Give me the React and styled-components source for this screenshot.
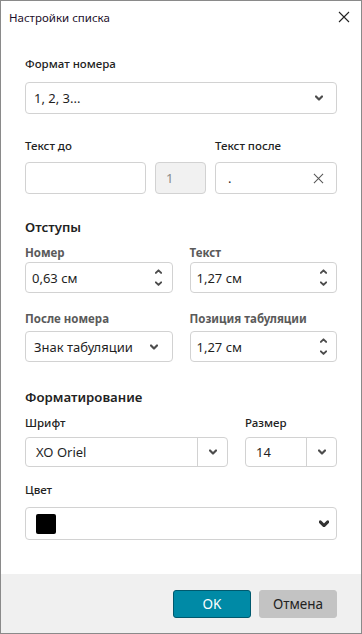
import React from 'react';
import styled, {createGlobalStyle} from 'styled-components';

const Global = createGlobalStyle`
  body {
    margin: 0;
    font-family: "Noto Sans", "Open Sans", sans-serif;
    color: #1f1f1f;
    background: #fff;
  }
`;

const Window = styled.div`
  width: 362px;
  height: 634px;
  box-sizing: border-box;
  border: 1px solid #8a8a8a;
  display: flex;
  flex-direction: column;
  background: #fff;
`;

const TitleBar = styled.div`
  height: 32px;
  display: flex;
  align-items: center;
  justify-content: space-between;
  padding: 0 11px 0 8px;
`;

const Title = styled.span`
  font-size: 11.5px;
  color: #1d0f2a;
`;

const CloseBtn = styled.button`
  border: 0;
  background: none;
  padding: 0;
  width: 12px;
  height: 12px;
  display: flex;
`;

const Body = styled.div`
  flex: 1;
  padding: 0 24px;
  display: flex;
  flex-direction: column;
`;

const Label = styled.div`
  height: 18px;
  line-height: 18px;
  font-size: 11.5px;
  font-weight: ${p => (p.$muted ? 700 : 500)};
  color: ${p => (p.$muted ? '#5a5a5a' : '#222')};
  margin-top: ${p => p.$top || 0}px;
  margin-bottom: ${p => p.$gap || 0}px;
  white-space: nowrap;
`;

const Heading = styled.div`
  height: 20px;
  line-height: 20px;
  font-size: 13.2px;
  font-weight: 600;
  color: #222;
  margin-top: ${p => p.$top}px;
`;

const Row = styled.div`
  display: grid;
  grid-template-columns: ${p => p.$cols};
  column-gap: ${p => p.$gap}px;
`;

const Box = styled.div`
  height: ${p => p.$h || 32}px;
  box-sizing: border-box;
  border: 1px solid #d2d2d2;
  border-radius: 4px;
  background: ${p => (p.$disabled ? '#f1f1f1' : '#fff')};
  display: flex;
  align-items: center;
  padding-left: ${p => p.$pad || 8}px;
  font-size: 13px;
  color: ${p => (p.$disabled ? '#8a8a8a' : '#1f1f1f')};
  overflow: hidden;
`;

const Value = styled.span`
  flex: 1;
  white-space: nowrap;
`;

const Side = styled.div`
  width: ${p => p.$w}px;
  align-self: stretch;
  display: flex;
  align-items: center;
  justify-content: center;
  border-left: ${p => (p.$split ? '1px solid #d2d2d2' : 'none')};
`;

const Spin = styled.div`
  width: 26px;
  display: flex;
  flex-direction: column;
  align-items: center;
  gap: 6px;
`;

const Swatch = styled.span`
  width: 20px;
  height: 20px;
  border-radius: 2px;
  background: #000;
  margin-left: 2px;
`;

const Footer = styled.div`
  height: 59px;
  background: #f0f0f0;
  display: flex;
  justify-content: flex-end;
  align-items: center;
  gap: 8px;
  padding-right: 24px;
`;

const Button = styled.button`
  width: 78px;
  height: 28px;
  border-radius: 3px;
  border: 1px solid ${p => (p.$primary ? '#00596e' : '#c3c3c3')};
  background: ${p => (p.$primary ? '#008aa6' : '#c3c3c3')};
  color: ${p => (p.$primary ? '#fff' : '#222')};
  font-family: inherit;
  font-size: 13.5px;
  padding: 0;
`;

function Chevron({dir = 'down', size = 8, color = '#4d4d4d', stroke = 2.2}) {
    const d = dir === 'down' ? 'M1 1.5 L4 4.5 L7 1.5' : 'M1 4.5 L4 1.5 L7 4.5';
    return (
        <svg width={size} height={size * 0.75} viewBox="0 0 8 6">
            <path d={d} fill="none" stroke={color} strokeWidth={stroke} strokeLinecap="round" strokeLinejoin="round"/>
        </svg>
    );
}

function Cross({size = 12, color = '#222'}) {
    return (
        <svg width={size} height={size} viewBox="0 0 12 12">
            <path d="M1 1 L11 11 M11 1 L1 11" stroke={color} strokeWidth="1.1"/>
        </svg>
    );
}

function Spinner() {
    return (
        <Spin>
            <Chevron dir="up" size={7}/>
            <Chevron dir="down" size={7}/>
        </Spin>
    );
}

function App() {
    return (
        <Window>
            <Global/>
            <TitleBar>
                <Title>Настройки списка</Title>
                <CloseBtn><Cross/></CloseBtn>
            </TitleBar>
            <Body>
                <Label $top={22} $gap={9}>Формат номера</Label>
                <Box>
                    <Value>1, 2, 3...</Value>
                    <Side $w={34}><Chevron/></Side>
                </Box>

                <Row $cols="121px 51px 1fr" $gap={9} style={{marginTop: 23}}>
                    <Label $gap={7}>Текст до</Label>
                    <div/>
                    <Label $gap={7}>Текст после</Label>
                    <Box/>
                    <Box $disabled $pad={10}>1</Box>
                    <Box $pad={12}>
                        <Value>.</Value>
                        <Side $w={36}><Cross size={11} color="#555"/></Side>
                    </Box>
                </Row>

                <Heading $top={23}>Отступы</Heading>
                <Row $cols="1fr 1fr" $gap={17} style={{marginTop: 7}}>
                    <Label $muted>Номер</Label>
                    <Label $muted>Текст</Label>
                    <Box $h={31} $pad={6}>
                        <Value>0,63 см</Value>
                        <Spinner/>
                    </Box>
                    <Box $h={31} $pad={6}>
                        <Value>1,27 см</Value>
                        <Spinner/>
                    </Box>
                </Row>
                <Row $cols="1fr 1fr" $gap={17} style={{marginTop: 17}}>
                    <Label $muted $gap={3}>После номера</Label>
                    <Label $muted $gap={3}>Позиция табуляции</Label>
                    <Box $h={31}>
                        <Value>Знак табуляции</Value>
                        <Side $w={36}><Chevron/></Side>
                    </Box>
                    <Box $h={31} $pad={6}>
                        <Value>1,27 см</Value>
                        <Spinner/>
                    </Box>
                </Row>

                <Heading $top={25}>Форматирование</Heading>
                <Row $cols="1fr 92px" $gap={17} style={{marginTop: 7}}>
                    <Label $gap={5}>Шрифт</Label>
                    <Label $gap={5}>Размер</Label>
                    <Box $h={30} $pad={10}>
                        <Value>XO Oriel</Value>
                        <Side $w={29} $split><Chevron/></Side>
                    </Box>
                    <Box $h={30} $pad={10}>
                        <Value>14</Value>
                        <Side $w={29} $split><Chevron/></Side>
                    </Box>
                </Row>

                <Label $top={14} $gap={8}>Цвет</Label>
                <Box $h={33}>
                    <Swatch/>
                    <Value/>
                    <Side $w={24}><Chevron size={10} color="#333" stroke={2.4}/></Side>
                </Box>
            </Body>
            <Footer>
                <Button $primary>OK</Button>
                <Button>Отмена</Button>
            </Footer>
        </Window>
    );
}

export default App;
